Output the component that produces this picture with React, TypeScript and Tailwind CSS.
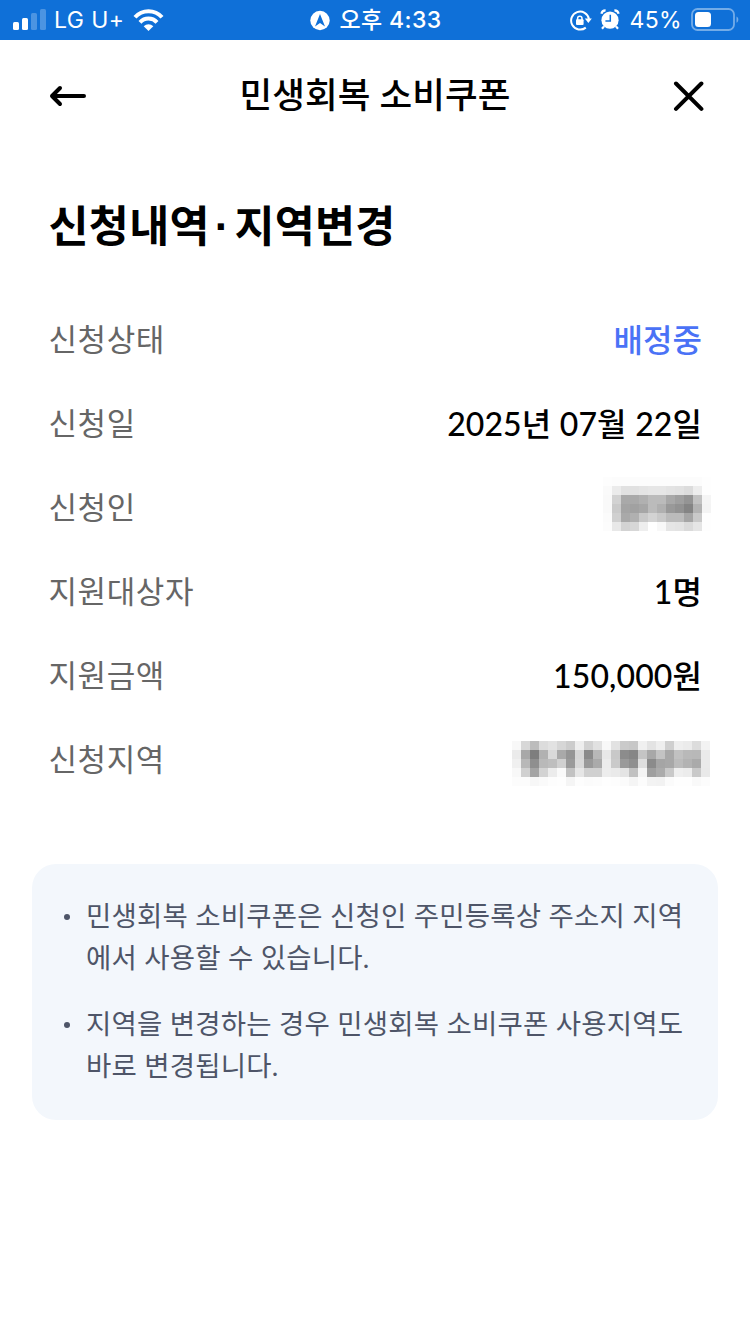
import type { ReactNode } from "react";

const NAME_MOSAIC = [
  "fdfcfcfcfcfcfcfcfcfcfcfe",
  "faebe1e1e4e6e6e3e1dcedfe",
  "f9d2a9a9b0bbbba89f94c2f5",
  "f9caa4a1a6bbb0999284b3f4",
  "fbd0a9b0c8d3c9bbbba5c9fe",
  "fce8d3d7eefff8e5e3dae5fe",
];

const REGION_MOSAIC = [
  "f8d7bcdce2d6cceed2e1f8e2cac7f0e3eecfeeebdcf3",
  "eba87eb1d9a995d68ab8e8c88c86c4a8c3a8c1b9b8ea",
  "f0b88fb9bed09ad899aaecca9a8fde8ba5a8bcb3aaea",
  "f8d0a4d3ecfac2e6d0d0edeae4c1f49fabc9efecc9e9",
  "fcfcf7fafdfef5fdfbfcfefdfbf5fcf3f2fbfefef9fc",
];

function Mosaic({ rows, label }: { rows: string[]; label: string }) {
  const cols = rows[0].length / 2;
  return (
    <svg
      width={cols * 9}
      height={rows.length * 9}
      shapeRendering="crispEdges"
      role="img"
      aria-label={label}
      className="shrink-0"
    >
      {rows.map((row, y) =>
        (row.match(/../g) ?? []).map((c, x) => (
          <rect key={`${x}-${y}`} x={x * 9} y={y * 9} width={9} height={9} fill={`#${c}${c}${c}`} />
        )),
      )}
    </svg>
  );
}

function StatusBar() {
  return (
    <div className="grid h-10 grid-cols-3 items-center bg-[#0f70d8] pr-[11px] pl-[13px] font-['Inter','Noto_Sans_CJK_KR',sans-serif] text-[23px] leading-10 text-white">
      <div className="flex items-center">
        <svg width="34" height="40" fill="#fff">
          <rect x="0" y="22" width="6" height="8" rx="1.5" />
          <rect x="9" y="18" width="6" height="12" rx="1.5" />
          <rect x="18" y="13" width="6" height="17" rx="1.5" opacity=".25" />
          <rect x="27" y="9" width="6" height="21" rx="1.5" opacity=".25" />
        </svg>
        <span className="ml-[7px] w-[71px] tracking-[0.4px] whitespace-nowrap">LG U+</span>
        <svg className="ml-2" width="32" height="40" fill="none" stroke="#fff" strokeWidth="4">
          <path d="M2 17.3a18 18 0 0 1 27 0" />
          <path d="M7 22.3a11.6 11.6 0 0 1 17 0" />
          <path d="M15.5 31l-4.8-4.8a7 7 0 0 1 9.6 0z" fill="#fff" stroke="none" />
        </svg>
      </div>
      <div className="flex items-center justify-center font-medium">
        <svg width="20" height="40">
          <circle cx="10" cy="20.5" r="9.7" fill="#fff" />
          <path d="M10 14l5 12.4-5-3.4-5 3.4z" fill="#0f70d8" />
        </svg>
        <span className="ml-[9px] tracking-[0.4px] whitespace-nowrap">오후 4:33</span>
      </div>
      <div className="flex items-center justify-end">
        <svg width="22" height="40" fill="none" stroke="#fff" strokeWidth="2">
          <path d="M15.8 27.6a9 9 0 1 1 3.2-8.6" />
          <path d="M14.8 18.5h7l-3.4 4.5z" fill="#fff" stroke="none" />
          <rect x="6" y="19.3" width="7.6" height="5.7" rx="1" fill="#fff" stroke="none" />
          <path d="M7.6 20v-1.6a2.2 2.2 0 0 1 4.4 0V20" strokeWidth="1.5" />
        </svg>
        <svg className="ml-2" width="20" height="40">
          <circle cx="10" cy="20.2" r="8.6" fill="#fff" />
          <path d="M1.4 13.8a4.2 4.2 0 0 1 4.2-3.4M18.6 13.8a4.2 4.2 0 0 0-4.2-3.4M4 26.4l-2 2.4M16 26.4l2 2.4" stroke="#fff" strokeWidth="2.2" fill="none" />
          <path d="M10.3 14.7v6.2H5.4" stroke="#0f70d8" strokeWidth="1.5" fill="none" />
        </svg>
        <span className="ml-[9px] tracking-[0.4px] whitespace-nowrap">45%</span>
        <svg className="ml-[9px]" width="48" height="40">
          <rect x="1" y="9" width="42" height="21" rx="5.5" fill="none" stroke="#fff" strokeWidth="1.8" opacity=".42" />
          <path d="M45.5 16.5c2.4.9 2.4 5.3 0 6.2z" fill="#fff" opacity=".42" />
          <rect x="4" y="12" width="16" height="15" rx="3.5" fill="#fff" />
        </svg>
      </div>
    </div>
  );
}

function Row({ label, children }: { label: string; children: ReactNode }) {
  return (
    <div className="flex h-[84px] items-center justify-between">
      <dt className="pb-[2px] pl-[0.5px] text-[31px] tracking-[0.6px] text-[#666]">{label}</dt>
      <dd className="text-[32px] font-medium tracking-[0.1px] text-black [word-spacing:0.3px]">{children}</dd>
    </div>
  );
}

function Notice({ children }: { children: ReactNode }) {
  return (
    <li className="flex">
      <span className="mt-[19px] mr-4 size-[6px] shrink-0 rounded-full bg-[#4e5568]" />
      <p className="whitespace-nowrap">{children}</p>
    </li>
  );
}

export default function App() {
  return (
    <div className="min-h-[1334px] w-[750px] bg-white font-['Lato','Noto_Sans_CJK_KR',sans-serif]">
      <StatusBar />
      <header className="grid h-28 grid-cols-[60px_1fr_60px] items-center px-[46px]">
        <button aria-label="뒤로" className="pl-[3px]">
          <svg width="38" height="24" fill="none" stroke="#000" strokeWidth="4" strokeLinecap="round" strokeLinejoin="round">
            <path d="M35 12H3M11 4L3 12l8 8" />
          </svg>
        </button>
        <h1 className="pb-[3px] text-center text-[35.5px] font-medium tracking-[0.1px]">
          민생회복 소비쿠폰
        </h1>
        <button aria-label="닫기" className="flex justify-end">
          <svg width="32" height="32" fill="none" stroke="#000" strokeWidth="4" strokeLinecap="round">
            <path d="M4 3.500l25.400 25.400M29.400 3.500L4 28.900" />
          </svg>
        </button>
      </header>
      <main>
        <h2 className="mt-[41px] h-16 pr-12 pl-[48.5px] text-[43.5px] leading-[64px] font-bold tracking-[0.3px]">
          신청내역
          <span className="inline-block w-[24.6px] text-center font-['Liberation_Sans',sans-serif] tracking-normal">·</span>
          지역변경
        </h2>
        <dl className="mt-[41px] px-12">
          <Row label="신청상태">
            <span className="text-[#4a72f6]">배정중</span>
          </Row>
          <Row label="신청일">2025년 07월 22일</Row>
          <Row label="신청인">
            <div className="-mt-2 mr-[-9px]">
              <Mosaic rows={NAME_MOSAIC} label="신청인" />
            </div>
          </Row>
          <Row label="지원대상자">1명</Row>
          <Row label="지원금액">150,000원</Row>
          <Row label="신청지역">
            <div className="mt-[7px] mr-[-8px]">
              <Mosaic rows={REGION_MOSAIC} label="신청지역" />
            </div>
          </Row>
        </dl>
        <ul className="mx-8 mt-[62px] flex h-[256px] flex-col gap-6 rounded-[24px] bg-[#f3f7fc] pt-[31px] pl-8 text-[27.5px] leading-[42px] tracking-[0.2px] text-[#4e5568]">
          <Notice>
            민생회복 소비쿠폰은 신청인 주민등록상 주소지 지역
            <br />
            에서 사용할 수 있습니다.
          </Notice>
          <Notice>
            지역을 변경하는 경우 민생회복 소비쿠폰 사용지역도
            <br />
            바로 변경됩니다.
          </Notice>
        </ul>
      </main>
    </div>
  );
}
